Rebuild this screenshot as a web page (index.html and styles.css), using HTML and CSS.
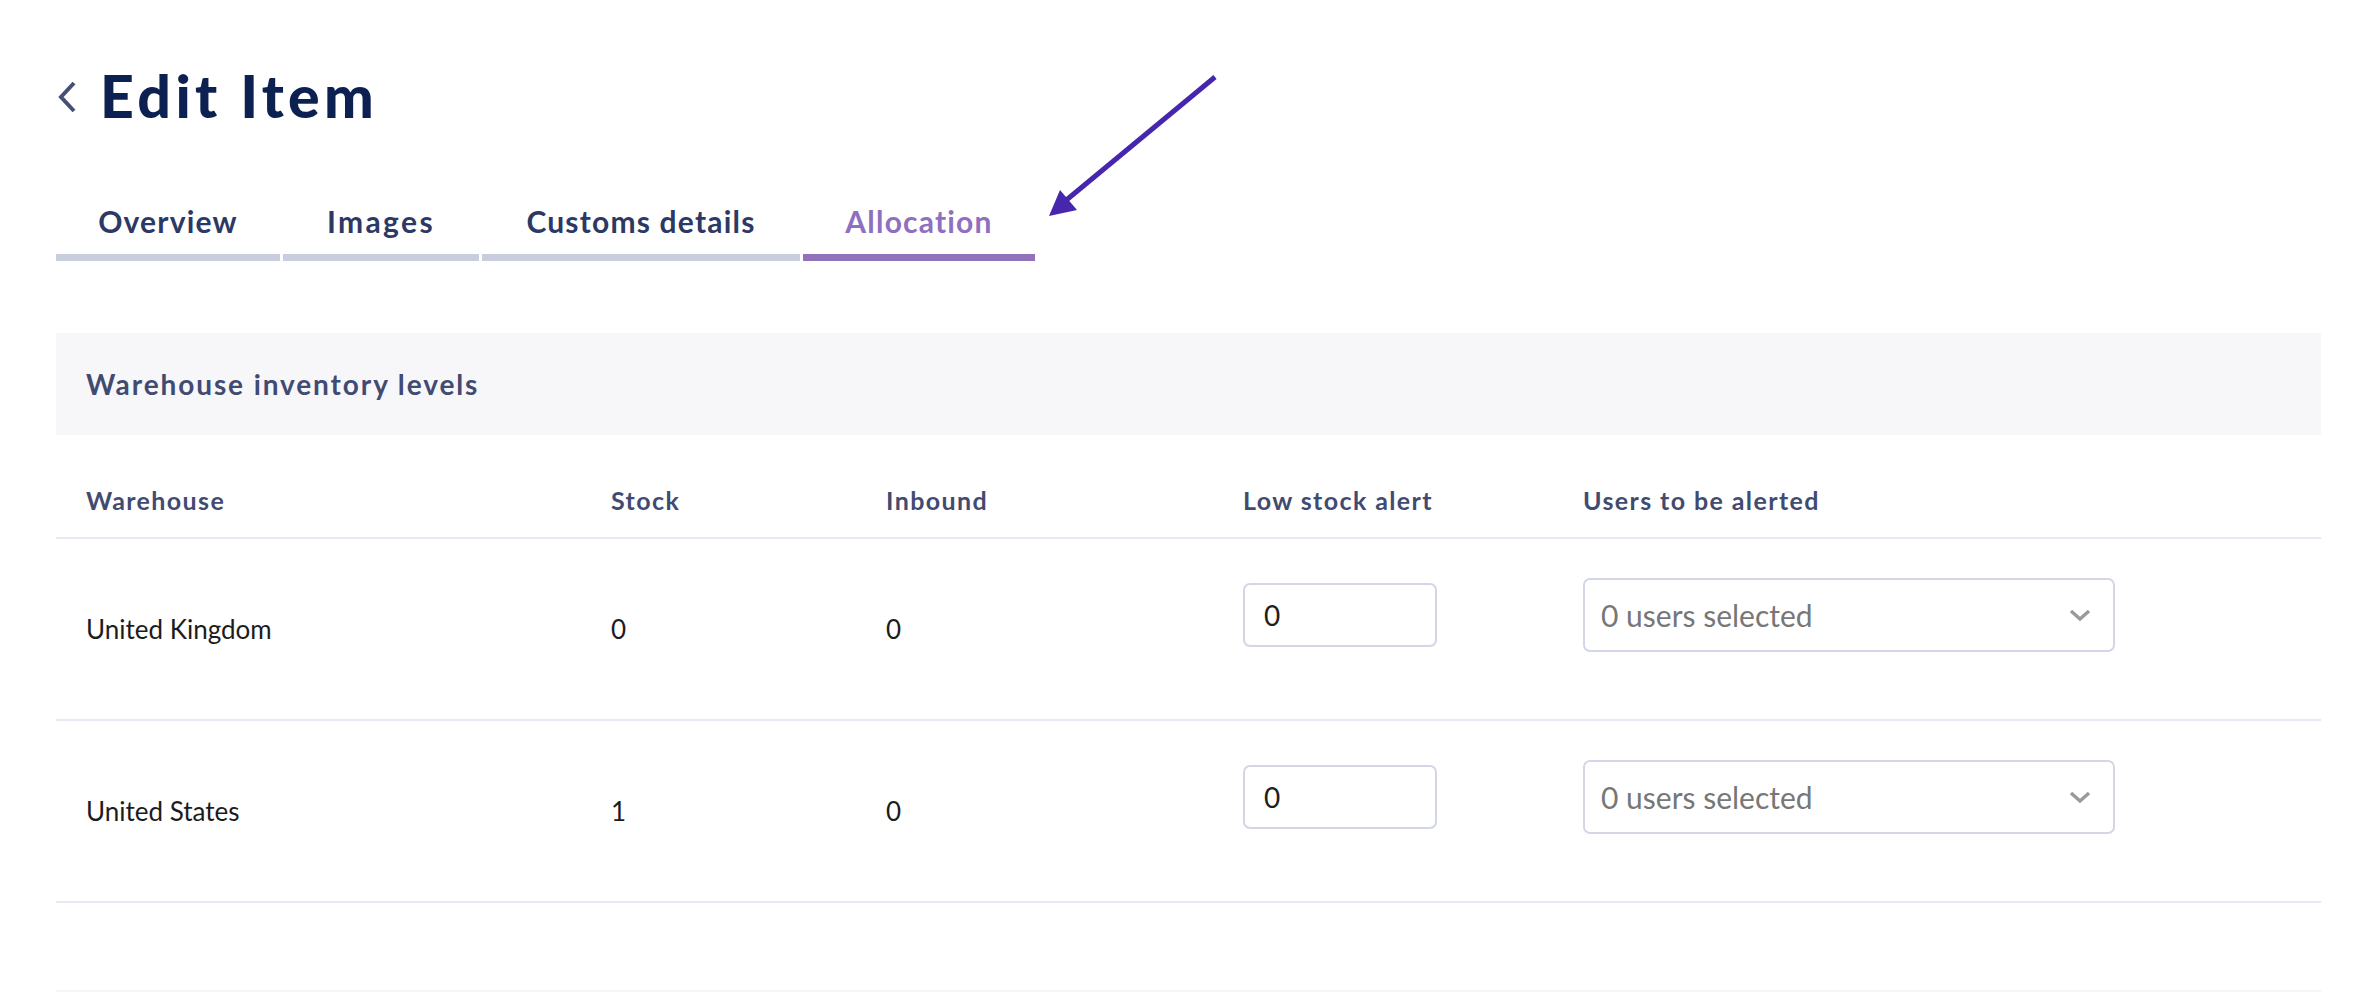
FILE: index.html
```html
<!DOCTYPE html>
<html lang="en">
<head>
<meta charset="utf-8">
<title>Edit Item</title>
<link rel="stylesheet" href="styles.css">
</head>
<body>
<div class="page">
  <header class="page-head">
    <span class="back" aria-label="Back">
      <svg width="22" height="34" viewBox="0 0 22 34"><path d="M18 3 L5 17 L18 31" fill="none" stroke="#45507a" stroke-width="4"/></svg>
    </span>
    <h1 class="title">Edit Item</h1>
  </header>

  <nav class="tabs">
    <div class="tab tab-overview">Overview</div>
    <div class="tab tab-images">Images</div>
    <div class="tab tab-customs">Customs details</div>
    <div class="tab tab-allocation active">Allocation</div>
  </nav>

  <section class="panel">
    <div class="panel-title">Warehouse inventory levels</div>
    <div class="table">
      <div class="row head">
        <div class="cell">Warehouse</div>
        <div class="cell">Stock</div>
        <div class="cell">Inbound</div>
        <div class="cell">Low stock alert</div>
        <div class="cell">Users to be alerted</div>
      </div>
      <div class="row">
        <div class="cell">United Kingdom</div>
        <div class="cell">0</div>
        <div class="cell">0</div>
        <div class="cell"><div class="input">0</div></div>
        <div class="cell"><div class="select"><span>0 users selected</span>
          <svg class="chev" width="22" height="13" viewBox="0 0 22 13"><path d="M2 2 L11 10 L20 2" fill="none" stroke="#9a9a9a" stroke-width="3.4"/></svg></div></div>
      </div>
      <div class="row">
        <div class="cell">United States</div>
        <div class="cell">1</div>
        <div class="cell">0</div>
        <div class="cell"><div class="input">0</div></div>
        <div class="cell"><div class="select"><span>0 users selected</span>
          <svg class="chev" width="22" height="13" viewBox="0 0 22 13"><path d="M2 2 L11 10 L20 2" fill="none" stroke="#9a9a9a" stroke-width="3.4"/></svg></div></div>
      </div>
      <div class="row-empty"></div>
    </div>
  </section>

  <svg class="arrow" width="180" height="150" viewBox="1040 70 180 150">
    <line x1="1215" y1="77" x2="1064" y2="202" stroke="#4526ad" stroke-width="5"/>
    <polygon points="1049,216 1060,190 1077,210" fill="#4526ad"/>
  </svg>
</div>
</body>
</html>
```

FILE: styles.css
```css
* { box-sizing: border-box; }
html, body { margin: 0; padding: 0; background: #ffffff; }
body { font-family: "Lato", "Liberation Sans", sans-serif; }

.page {
  position: relative;
  width: 2376px;
  height: 992px;
  overflow: hidden;
  padding: 0 55px 0 56px;
}

.page-head {
  display: flex;
  align-items: center;
  gap: 22px;
  height: 70px;
  margin-top: 61px;
}
.back { display: flex; width: 22px; height: 34px; margin-top: 2px; }
.title {
  margin: 0;
  font-size: 59px;
  font-weight: 900;
  color: #0c2151;
  line-height: 70px;
  letter-spacing: 4.4px;
}

.tabs {
  display: flex;
  gap: 3px;
  margin-top: 66px;
}
.tab {
  height: 64px;
  line-height: 48px;
  text-align: center;
  font-size: 30px;
  font-weight: 700;
  color: #2c3964;
  border-bottom: 7px solid #c8cedd;
  letter-spacing: 1.2px;
}
.tab-overview { width: 224px; }
.tab-images { width: 196px; letter-spacing: 2.4px; }
.tab-customs { width: 318px; }
.tab-allocation { width: 232px; }
.tab.active { color: #8f6fc0; border-bottom-color: #9072bd; }

.panel { margin-top: 72px; }
.panel-title {
  height: 102px;
  background: #f7f7fa;
  padding-left: 30px;
  line-height: 102px;
  font-size: 28px;
  font-weight: 700;
  color: #414b72;
  letter-spacing: 1.9px;
}

.row {
  display: grid;
  grid-template-columns: 525px 275px 357px 340px 1fr;
  height: 182px;
  align-items: center;
  border-bottom: 2px solid #e8e8f5;
  font-size: 26px;
  color: #1c1c1c;
}
.row.head {
  height: 104px;
  align-items: end;
  padding-bottom: 22px;
  font-size: 25px;
  font-weight: 700;
  color: #414b72;
  letter-spacing: 1.4px;
}
.cell { padding-left: 30px; }

.input, .select {
  border: 2px solid #d3d6e6;
  border-radius: 7px;
  margin-top: -28px;
}
.input {
  width: 194px;
  height: 64px;
  line-height: 60px;
  padding-left: 19px;
  font-size: 28px;
  color: #1e1e1e;
}
.select {
  width: 532px;
  height: 74px;
  display: flex;
  align-items: center;
  justify-content: space-between;
  padding: 0 22px 0 16px;
  font-size: 30px;
  color: #777777;
}
.chev { display: block; }

.row-empty {
  height: 91px;
  border-bottom: 4px solid #f5f5f7;
}

.arrow {
  position: absolute;
  left: 1040px;
  top: 70px;
}
```
